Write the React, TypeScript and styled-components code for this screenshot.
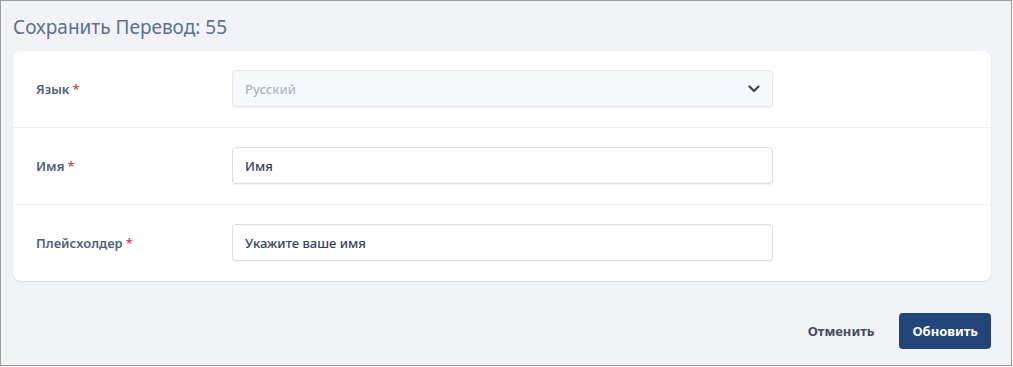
import React from 'react';
import styled, { createGlobalStyle } from 'styled-components';

const GlobalStyle = createGlobalStyle`
  html, body {
    margin: 0;
    padding: 0;
    background: #ffffff;
  }
  body {
    font-family: "Noto Sans", "Open Sans", sans-serif;
  }
`;

const Frame = styled.div`
  box-sizing: border-box;
  width: 1012px;
  height: 366px;
  border: 1px solid #9c9c9c;
  background: #f2f3f7;
  padding: 11px 20px 0 12px;
`;

const Title = styled.h1`
  margin: 0;
  height: 39px;
  font-size: 19px;
  font-weight: 400;
  line-height: 30px;
  color: #5b6f91;
`;

const Card = styled.div`
  background: #ffffff;
  border-radius: 8px;
  box-shadow: 0 1px 2px rgba(30, 40, 70, 0.12);
`;

const Row = styled.div<{ $last?: boolean }>`
  display: grid;
  grid-template-columns: 196px 541px;
  align-items: center;
  height: 76px;
  padding: 0 23px;
  border-bottom: ${(p) => (p.$last ? 'none' : '1px solid #edf0f5')};
`;

const Label = styled.label`
  font-size: 13px;
  font-weight: 600;
  color: #4f5f7d;
`;

const Star = styled.span`
  color: #e0475b;
  margin-left: 3px;
`;

const Field = styled.div<{ $disabled?: boolean }>`
  box-sizing: border-box;
  display: flex;
  align-items: center;
  justify-content: space-between;
  height: 37px;
  margin-top: -1px;
  padding: 0 12px;
  border: 1px solid ${(p) => (p.$disabled ? '#e3e7ef' : '#d9dde5')};
  border-radius: 4px;
  background: ${(p) => (p.$disabled ? '#f8f9fc' : '#ffffff')};
  box-shadow: 0 1px 1px rgba(20, 30, 60, 0.06);
  font-size: 13px;
  font-weight: 500;
  color: ${(p) => (p.$disabled ? '#aab4c6' : '#36425c')};
`;

const Actions = styled.div`
  display: flex;
  justify-content: flex-end;
  align-items: center;
  gap: 25px;
  margin-top: 32px;
`;

const Button = styled.button<{ $primary?: boolean }>`
  height: 36px;
  padding: 0 ${(p) => (p.$primary ? '13px' : '0')};
  border: none;
  border-radius: 4px;
  font-family: inherit;
  font-size: 13px;
  font-weight: 700;
  color: ${(p) => (p.$primary ? '#ffffff' : '#424b5c')};
  background: ${(p) => (p.$primary ? '#234478' : 'transparent')};
  cursor: pointer;
`;

const Chevron = () => (
  <svg width="12" height="8" viewBox="0 0 12 8" fill="none">
    <path d="M1.5 1.5 L6 6 L10.5 1.5" stroke="#3b4560" strokeWidth="2.2" strokeLinecap="round" strokeLinejoin="round" />
  </svg>
);

export default function App() {
  return (
    <>
      <GlobalStyle />
      <Frame>
        <Title>Сохранить Перевод: 55</Title>
        <Card>
          <Row>
            <Label>
              Язык<Star>*</Star>
            </Label>
            <Field $disabled>
              <span>Русский</span>
              <Chevron />
            </Field>
          </Row>
          <Row>
            <Label>
              Имя<Star>*</Star>
            </Label>
            <Field>Имя</Field>
          </Row>
          <Row $last>
            <Label>
              Плейсхолдер<Star>*</Star>
            </Label>
            <Field>Укажите ваше имя</Field>
          </Row>
        </Card>
        <Actions>
          <Button>Отменить</Button>
          <Button $primary>Обновить</Button>
        </Actions>
      </Frame>
    </>
  );
}
